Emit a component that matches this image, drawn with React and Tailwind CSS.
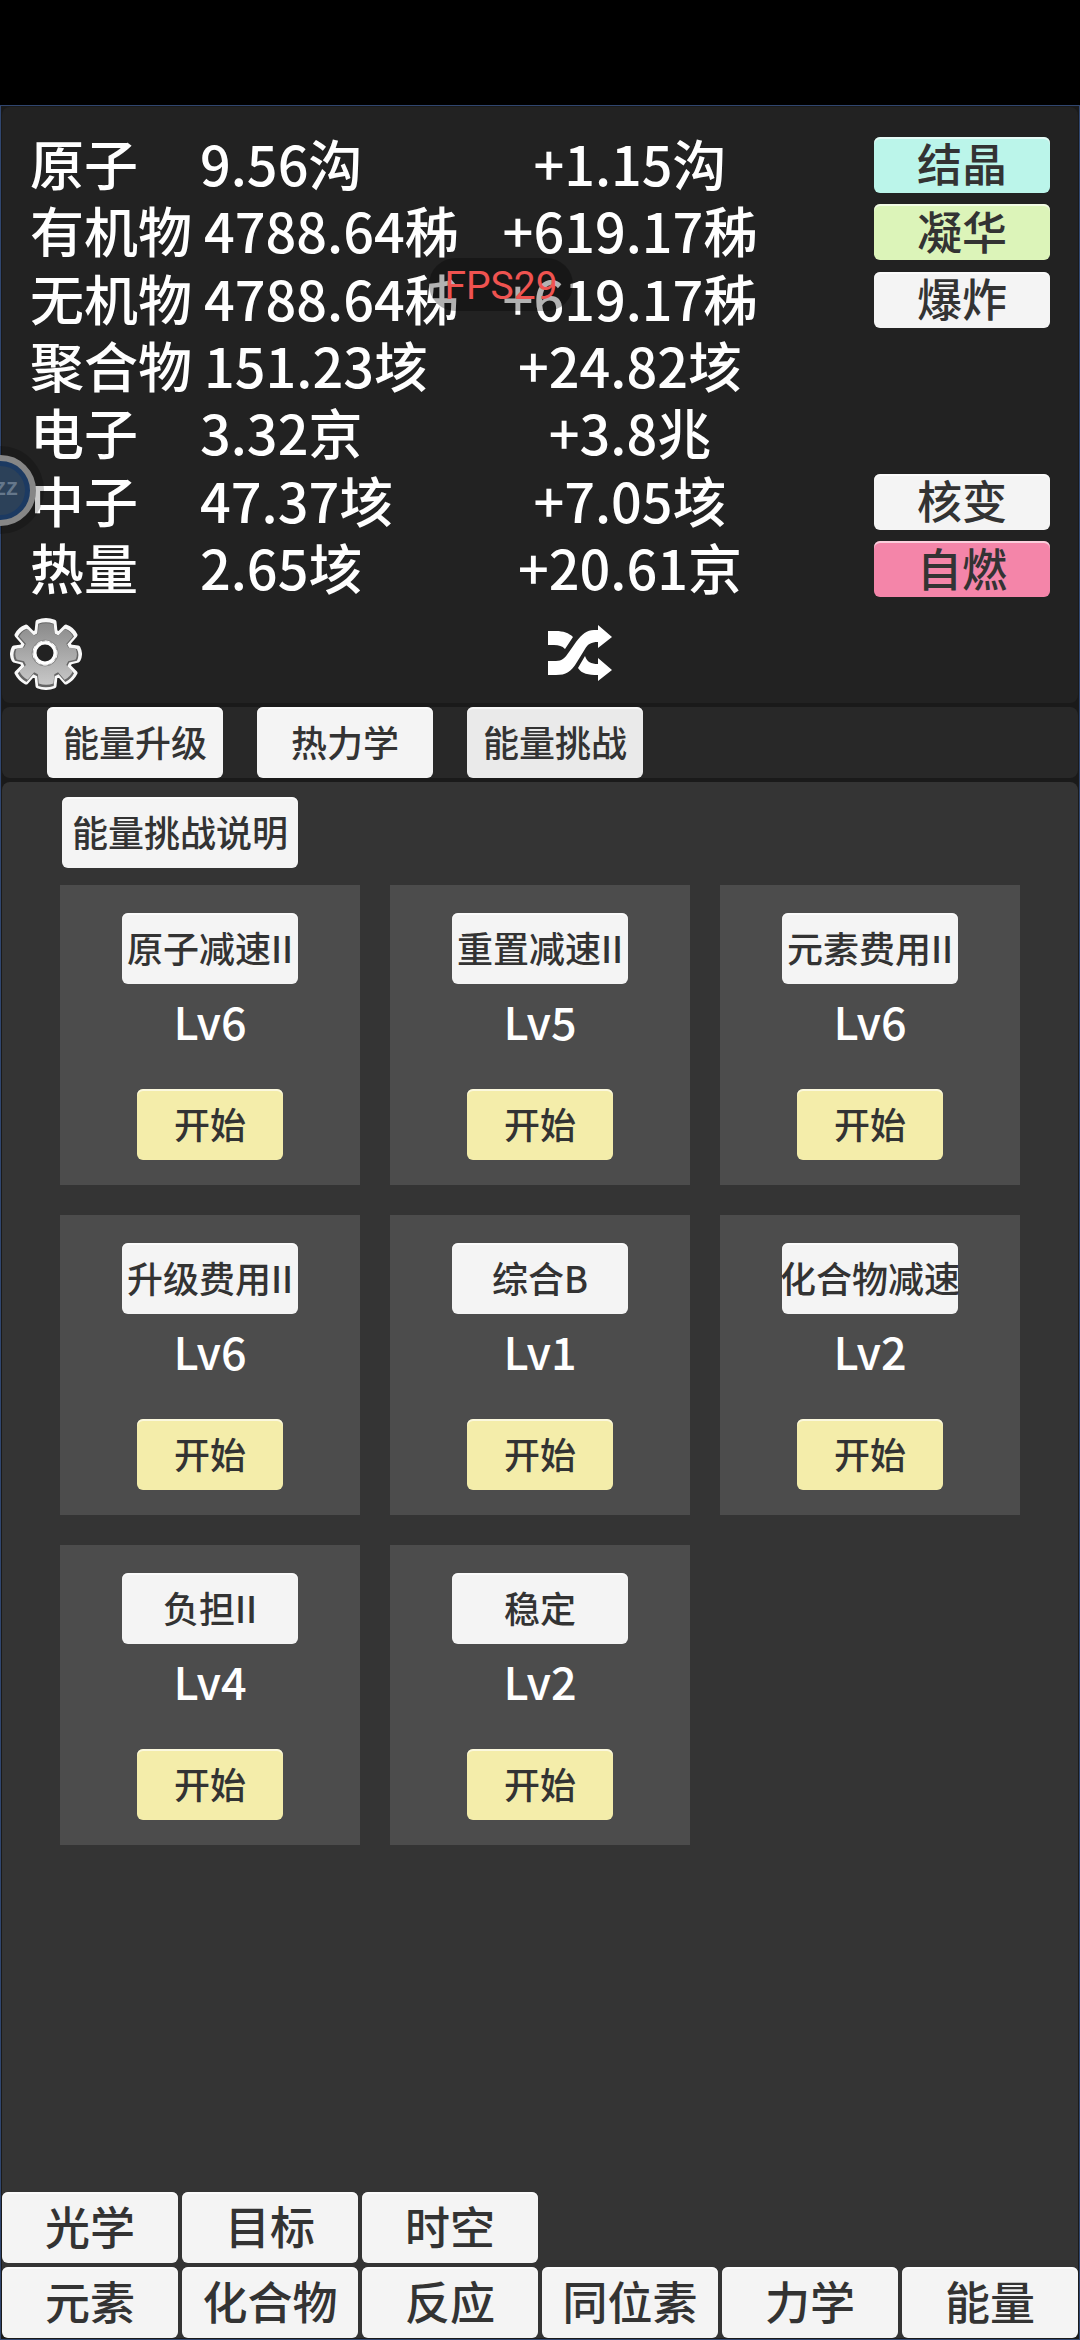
import { useState } from 'react';

const resources = [
  { name: '原子', amount: '9.56沟', rate: '+1.15沟', action: '结晶', tone: 'bg-[#bbf5ea]' },
  { name: '有机物', amount: '4788.64秭', rate: '+619.17秭', action: '凝华', tone: 'bg-[#dcf4b9]' },
  { name: '无机物', amount: '4788.64秭', rate: '+619.17秭', action: '爆炸', tone: 'bg-[#f4f4f4]' },
  { name: '聚合物', amount: '151.23垓', rate: '+24.82垓' },
  { name: '电子', amount: '3.32京', rate: '+3.8兆' },
  { name: '中子', amount: '47.37垓', rate: '+7.05垓', action: '核变', tone: 'bg-[#f4f4f4]' },
  { name: '热量', amount: '2.65垓', rate: '+20.61京', action: '自燃', tone: 'bg-[#f485a9]' },
];

const tabs = ['能量升级', '热力学', '能量挑战'];

const challenges = [
  { name: '原子减速II', level: 6 },
  { name: '重置减速II', level: 5 },
  { name: '元素费用II', level: 6 },
  { name: '升级费用II', level: 6 },
  { name: '综合B', level: 1 },
  { name: '化合物减速', level: 2 },
  { name: '负担II', level: 4 },
  { name: '稳定', level: 2 },
];

const upperNav = ['光学', '目标', '时空'];
const lowerNav = ['元素', '化合物', '反应', '同位素', '力学', '能量'];

const GameButton = ({ className = '', children, ...props }) => (
  <button
    type="button"
    className={`flex items-center justify-center whitespace-nowrap rounded-md pb-1 leading-none text-[#333] shadow-[inset_0_2px_0_rgba(255,255,255,0.6)] ${className}`}
    {...props}
  >
    {children}
  </button>
);

const GearIcon = () => (
  <svg viewBox="0 0 72 74" className="h-[74px] w-[72px]" aria-hidden="true">
    <defs>
      <linearGradient id="gear-metal" x1="0" y1="0" x2="0" y2="1">
        <stop offset="0" stopColor="#8a8a8a" />
        <stop offset="1" stopColor="#c8c8c8" />
      </linearGradient>
      <path
        id="gear-shape"
        d="M28 6Q36 3 44 6L45 16L49 18L56 11Q62 13 65 19L58 27L60 31L68 32Q71 38 68 44L60 46L58 50L65 57Q62 63 56 66L49 58L45 60L44 70Q36 73 28 70L27 60L23 58L16 66Q10 63 7 57L14 50L12 46L4 44Q1 38 4 32L12 31L14 27L7 19Q10 13 16 11L23 18L27 16Z"
      />
    </defs>
    <use href="#gear-shape" fill="#f8f8f8" stroke="#f8f8f8" strokeWidth="5" strokeLinejoin="round" />
    <use href="#gear-shape" fill="#666" transform="translate(1 2) scale(.97)" />
    <use href="#gear-shape" fill="url(#gear-metal)" transform="translate(3 3) scale(.92)" />
    <circle cx="35" cy="37" r="13" fill="#b4b4b4" stroke="#868686" />
    <circle cx="35" cy="37" r="10" fill="#222" stroke="#fff" strokeWidth="3" />
    <circle cx="35" cy="37" r="12" fill="none" stroke="#fff" strokeWidth="1" strokeDasharray="5 3" />
  </svg>
);

const ShuffleIcon = () => (
  <svg viewBox="0 0 64 56" className="h-14 w-16" fill="#fff" aria-hidden="true">
    <path d="M0 6H8C15 6 21 8 25 12L17 24C14 21 11 20 6 20H0Z" />
    <path d="M0 36H8C14 36 17 33 21 27L28 17C34 9 39 5 46 5H50V0L64 12L50 23V17C43 17 40 19 37 24L29 37C23 47 18 50 8 50H0Z" />
    <path d="M37 31C39 37 43 39 50 39V33L64 45L50 56V50C40 50 34 49 30 43Z" />
  </svg>
);

const App = () => {
  const [activeTab, setActiveTab] = useState('能量挑战');

  return (
    <div className="relative flex min-h-screen flex-col overflow-hidden bg-black pt-[105px] font-['Noto_Sans_CJK_SC',sans-serif] font-medium">
      <div className="flex grow flex-col border border-[#30466f] bg-[#1a1a1a] p-px">
        {/* Resources */}
        <header className="rounded-lg bg-[#222] px-7 pt-6">
          <table className="block text-[54px] leading-none text-white">
            <tbody className="grid h-[472px] grid-rows-7">
              {resources.map((item) => (
                <tr key={item.name} className="flex items-center">
                  <th scope="row" className="min-w-[170px] whitespace-nowrap pb-1 pr-3 text-left font-medium">
                    {item.name}
                  </th>
                  <td className="min-w-0 flex-1 whitespace-nowrap pb-1">{item.amount}</td>
                  <td className="w-[300px] whitespace-nowrap pb-1 text-center">{item.rate}</td>
                  <td className="flex w-[270px] justify-end">
                    {item.action && (
                      <GameButton className={`h-14 w-44 text-[45px] ${item.tone}`}>{item.action}</GameButton>
                    )}
                  </td>
                </tr>
              ))}
            </tbody>
          </table>
          <div className="-mx-5 flex h-[100px] items-center">
            <div className="flex-1">
              <button type="button" aria-label="设置" className="block">
                <GearIcon />
              </button>
            </div>
            <div className="flex-1">
              <button type="button" aria-label="切换" className="ml-2 block">
                <ShuffleIcon />
              </button>
            </div>
          </div>
        </header>

        {/* Energy tabs */}
        <nav className="mt-1 flex gap-[34px] rounded-lg bg-[#282828] px-[45px]">
          {tabs.map((tab) => (
            <GameButton
              key={tab}
              onClick={() => setActiveTab(tab)}
              className={`h-[71px] w-44 text-4xl ${activeTab === tab ? 'bg-[#eaeaea]' : 'bg-[#f4f4f4]'}`}
            >
              {tab}
            </GameButton>
          ))}
        </nav>

        {/* Challenges */}
        <main className="mt-1 flex grow flex-col rounded-lg bg-[#343434]">
          <div className="px-[58px] pt-[15px]">
            <GameButton className="ml-0.5 h-[71px] w-[236px] bg-[#f4f4f4] text-4xl">能量挑战说明</GameButton>
            <div className="mt-[17px] grid grid-cols-3 gap-[30px]">
              {challenges.map((challenge) => (
                <section key={challenge.name} className="flex flex-col items-center bg-[#4c4c4c] pb-[25px] pt-7">
                  <GameButton className="h-[71px] w-44 bg-[#f4f4f4] text-4xl">{challenge.name}</GameButton>
                  <p className="flex h-[105px] items-start pt-3.5 text-[45px] leading-none text-white">
                    Lv{challenge.level}
                  </p>
                  <GameButton className="h-[71px] w-[146px] bg-[#f4edaa] text-4xl">开始</GameButton>
                </section>
              ))}
            </div>
          </div>

          <nav className="mt-auto grid grid-cols-6 gap-1">
            {upperNav.map((label) => (
              <GameButton key={label} className="h-[71px] bg-[#f4f4f4] text-[45px]">{label}</GameButton>
            ))}
            {lowerNav.map((label, index) => (
              <GameButton
                key={label}
                className={`h-[71px] bg-[#f4f4f4] text-[45px] ${index === 0 ? 'col-start-1' : ''}`}
              >
                {label}
              </GameButton>
            ))}
          </nav>
        </main>
      </div>

      {/* Frame rate overlay */}
      <div className="absolute left-[429px] top-[258px] flex h-[53px] w-36 items-center justify-center rounded-full bg-black/30 pt-1 font-['Roboto',sans-serif] text-[39px] font-normal leading-none text-[#ef5350]">
        FPS29
      </div>

      {/* Floating assistant ball */}
      <button
        type="button"
        className="absolute -left-11 top-[446px] flex size-[88px] items-center justify-center rounded-full bg-black/20"
      >
        <span className="flex size-[71px] items-center justify-center rounded-full border-[6px] border-[#868686] bg-[#1c3a62]">
          <span className="flex size-[49px] items-center justify-center rounded-full bg-[#2c4159] font-['Liberation_Mono',monospace] text-xl font-bold text-[#65778b]">
            ZZZ
          </span>
        </span>
      </button>
    </div>
  );
};

export default App;
